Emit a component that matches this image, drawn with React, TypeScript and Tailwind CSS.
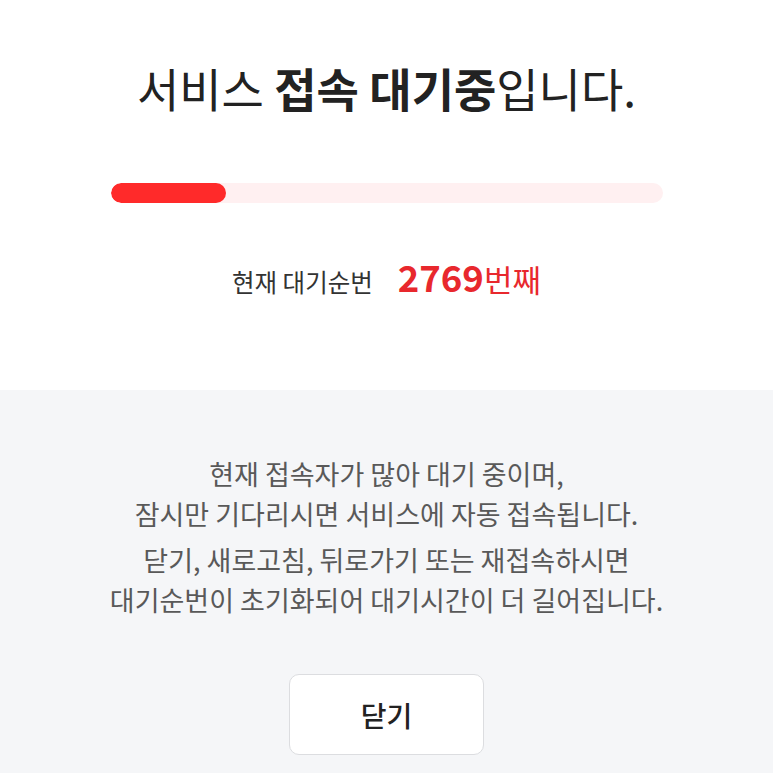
export default function App() {
  return (
    <div
      className="min-h-[773px] w-full bg-[#f5f6f8]"
      style={{ fontFamily: '"Noto Sans CJK KR", "Noto Sans", sans-serif' }}
    >
      <section className="h-[390px] bg-white pt-[60px]">
        <h1 className="text-center text-[46px] leading-[54px] font-normal text-[#222]">
          서비스 <strong className="font-bold">접속 대기중</strong>입니다.
        </h1>

        <div className="mx-auto mt-[69px] h-5 w-[552px] overflow-hidden rounded-full bg-[#fff0f1]">
          <div className="h-full w-[115px] rounded-full bg-[#ff2a2a]" />
        </div>

        <div className="mt-[54px] flex items-baseline justify-center leading-[40px]">
          <span className="text-[24.5px] text-[#333]">현재 대기순번</span>
          <span className="ml-[25px] text-[36.5px] font-bold text-[#e8282d]">2769</span>
          <span className="text-[31px] text-[#e8282d]">번째</span>
        </div>
      </section>

      <section className="pt-[64px] pb-5 text-center text-[27px] leading-[40px] text-[#595959]">
        <p>
          현재 접속자가 많아 대기 중이며,
          <br />
          잠시만 기다리시면 서비스에 자동 접속됩니다.
        </p>
        <p className="mt-[6px]">
          닫기, 새로고침, 뒤로가기 또는 재접속하시면
          <br />
          대기순번이 초기화되어 대기시간이 더 길어집니다.
        </p>

        <button className="mx-auto mt-[54px] flex h-[81px] w-[195px] items-center justify-center rounded-[10px] border border-[#dcdde0] bg-white text-[28px] font-medium text-[#222]">
          닫기
        </button>
      </section>
    </div>
  );
}
